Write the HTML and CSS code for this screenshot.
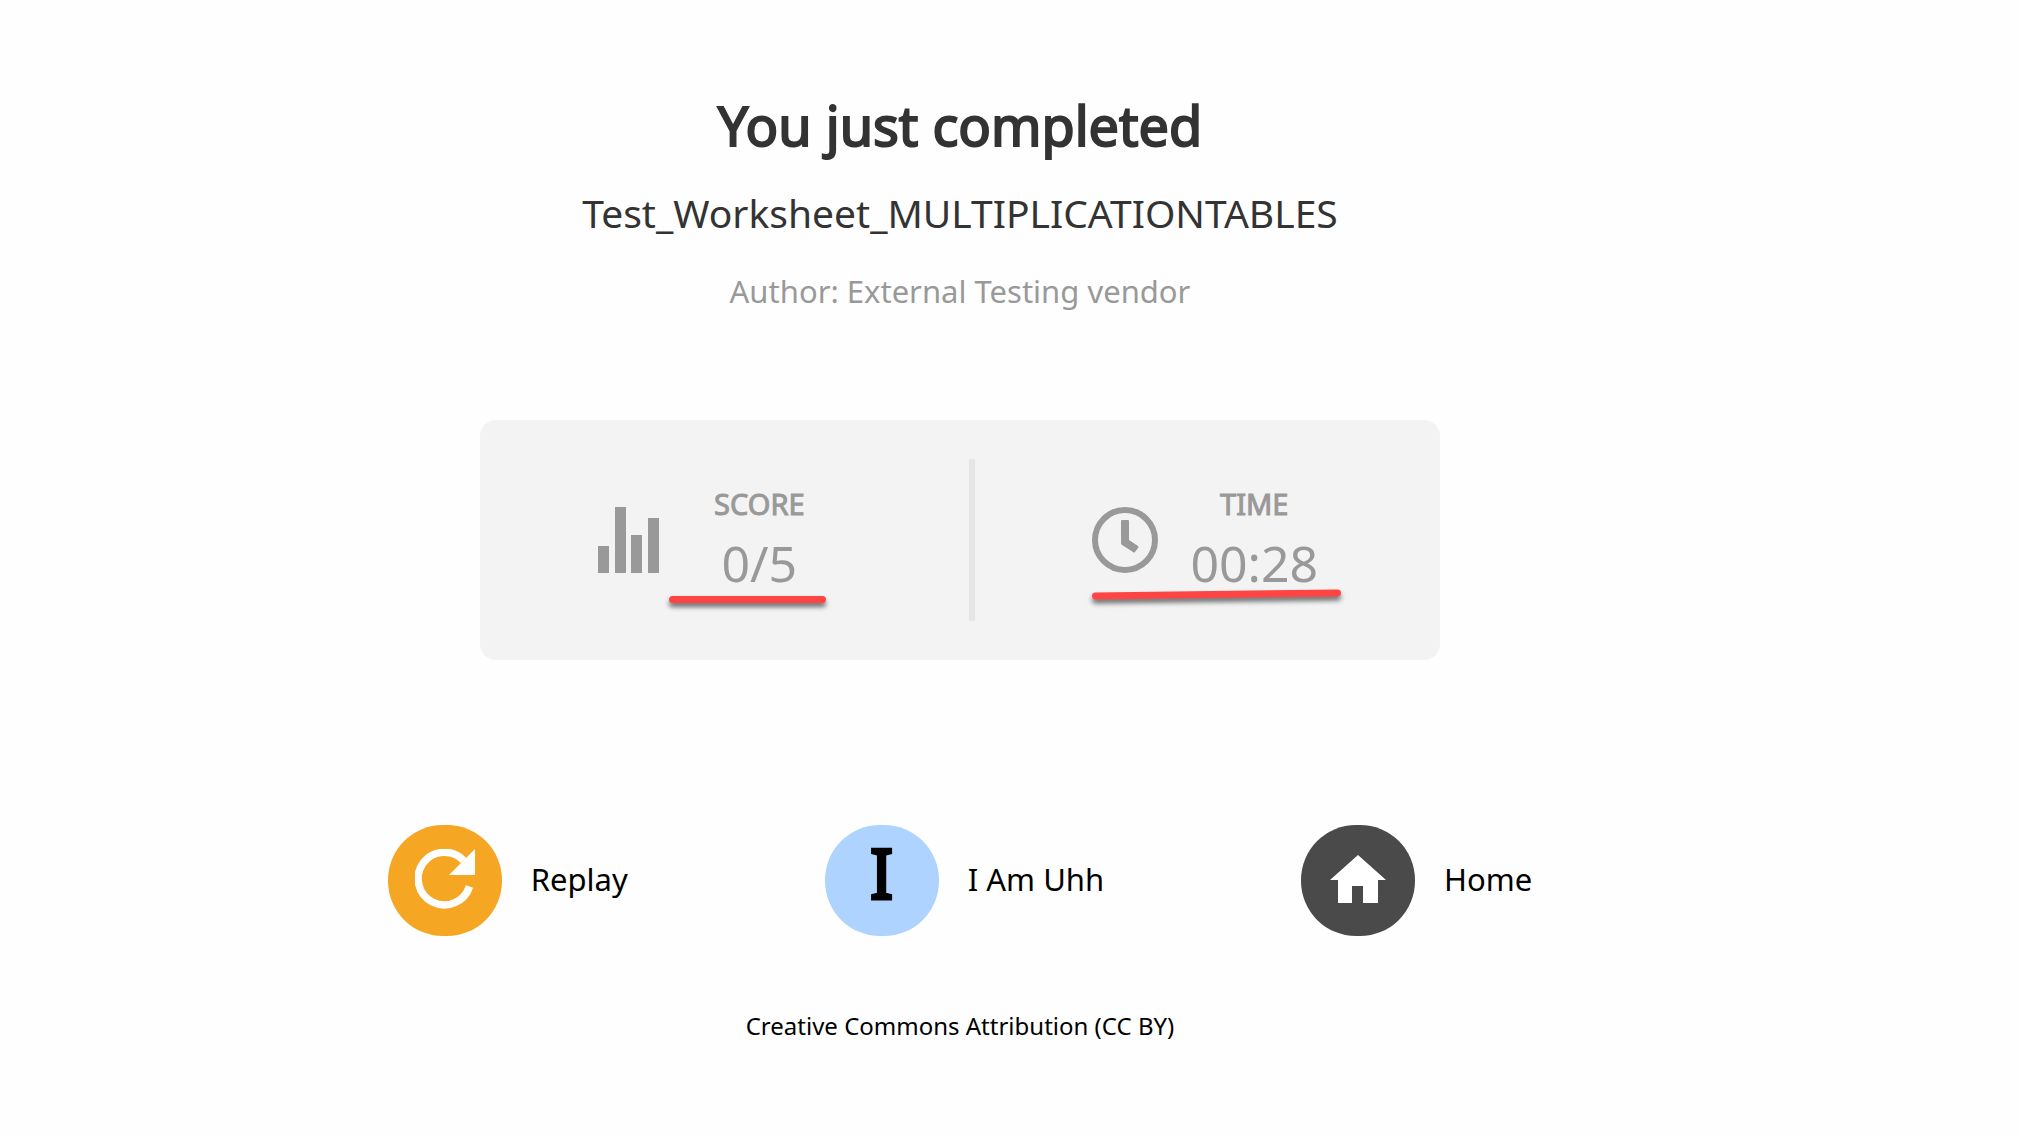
FILE: index.html
```html
<!DOCTYPE html>
<html lang="en">
<head>
<meta charset="utf-8">
<title>Worksheet completed</title>
<link rel="stylesheet" href="styles.css">
</head>
<body>
<main class="result">
  <h1 class="heading">You just completed</h1>
  <p class="worksheet">Test_Worksheet_MULTIPLICATIONTABLES</p>
  <p class="author">Author: External Testing vendor</p>

  <section class="card">
    <div class="stat stat-score">
      <svg class="stat-icon" viewBox="0 0 66 66" aria-hidden="true">
        <path d="M0 39h11v27H0zM17 0h11v66H17zM33 28h11v38H33zM50 11h11v55H50z" fill="currentColor"/>
      </svg>
      <div class="stat-text">
        <span class="stat-label">SCORE</span>
        <span class="stat-value">0/5</span>
      </div>
      <span class="mark mark-score"></span>
    </div>
    <div class="divider"></div>
    <div class="stat stat-time">
      <svg class="stat-icon" viewBox="0 0 66 66" aria-hidden="true">
        <circle cx="33" cy="33" r="30" fill="none" stroke="currentColor" stroke-width="6"/>
        <path d="M30 13h6q1 0 1 1v19l9 6q1 1 0 2l-3 4q-1 1-2 0L30 38q-1-1-1-2V14q0-1 1-1z" fill="currentColor"/>
      </svg>
      <div class="stat-text">
        <span class="stat-label">TIME</span>
        <span class="stat-value">00:28</span>
      </div>
      <span class="mark mark-time"></span>
    </div>
  </section>

  <nav class="actions">
    <button class="action" type="button">
      <span class="disc disc-replay">
        <svg class="disc-icon" viewBox="0 0 60 60" aria-hidden="true">
          <path d="M54.500 37.500A26.300 26.300 0 1 1 48.500 11.500" fill="none" stroke="#fff" stroke-width="7.500"/>
          <path d="M60 0v26H34z" fill="#fff"/>
        </svg>
      </span>
      <span class="action-label">Replay</span>
    </button>
    <button class="action" type="button">
      <span class="disc disc-user">I</span>
      <span class="action-label">I Am Uhh</span>
    </button>
    <button class="action" type="button">
      <span class="disc disc-home">
        <svg class="disc-icon" viewBox="0 0 60 60" aria-hidden="true">
          <path d="M30 5L58 30H50V53H35V36H24V53H10V30H2z" fill="#fff"/>
        </svg>
      </span>
      <span class="action-label">Home</span>
    </button>
  </nav>

  <footer class="license">Creative Commons Attribution (CC BY)</footer>
</main>
</body>
</html>
```
FILE: styles.css
```css
* { box-sizing: border-box; }

body {
  margin: 0;
  background: #fefefe;
  color: #000;
  font-family: "Noto Sans", sans-serif;
}

.result {
  display: flex;
  flex-direction: column;
  align-items: center;
  margin-right: 100px;
  padding-top: 87px;
}

.heading {
  margin: 0;
  color: #333;
  font-size: 54px;
  font-weight: 400;
  line-height: 76px;
  -webkit-text-stroke: 2px #333;
}

.worksheet {
  margin: 24px 0 0;
  color: #333;
  font-size: 39px;
  line-height: 52px;
}

.author {
  margin: 32px 0 0;
  color: #999;
  font-size: 31px;
  line-height: 40px;
}

.card {
  display: grid;
  grid-template-columns: 105fr 6px 100fr;
  align-items: center;
  width: 50%;
  height: 240px;
  margin-top: 109px;
  border-radius: 16px;
  background: #f3f3f3;
  color: #999;
}

.stat {
  position: relative;
  display: flex;
  align-items: center;
  justify-content: center;
  gap: 32px;
}

.stat-score { padding-right: 28px; }
.stat-time { padding-right: 4px; }

.stat-icon { width: 66px; height: 66px; }

.stat-text {
  display: flex;
  flex-direction: column;
  align-items: center;
  min-width: 126px;
  padding-bottom: 4px;
}

.stat-label {
  font-size: 29px;
  line-height: 50px;
  -webkit-text-stroke: 1px #999;
}

.stat-value { font-size: 50px; line-height: 68px; }

.divider { height: 162px; background: #e6e6e6; }

/* hand-drawn red underlines over the card */
.mark {
  position: absolute;
  height: 7px;
  border-radius: 4px;
  background: #f44;
  box-shadow: 0 4px 5px rgba(0, 0, 0, .55);
}

.mark-score { top: 117px; left: 189px; width: 157px; }
.mark-time { top: 112px; left: 117px; width: 249px; transform: rotate(-.7deg); }

.actions {
  display: flex;
  justify-content: center;
  gap: 197px;
  margin-top: 165px;
}

.action {
  display: flex;
  align-items: center;
  gap: 29px;
  padding: 0;
  border: 0;
  background: none;
  color: #000;
  font: inherit;
  cursor: pointer;
}

.action-label { padding-bottom: 4px; font-size: 31px; line-height: 42px; }

.disc {
  display: flex;
  align-items: center;
  justify-content: center;
  width: 114px;
  height: 111px;
  border-radius: 55px;
}

.disc-replay { padding-bottom: 3px; background: #f5a623; }
.disc-user {
  padding-bottom: 18px;
  background: #aed3ff;
  font-size: 70px;
  line-height: 92px;
  -webkit-text-stroke: 3px #000;
}
.disc-home { padding-bottom: 2px; background: #4a4a4a; }
.disc-icon { width: 60px; height: 60px; }

.license {
  margin-top: 73px;
  font-size: 24px;
  line-height: 34px;
}
```
